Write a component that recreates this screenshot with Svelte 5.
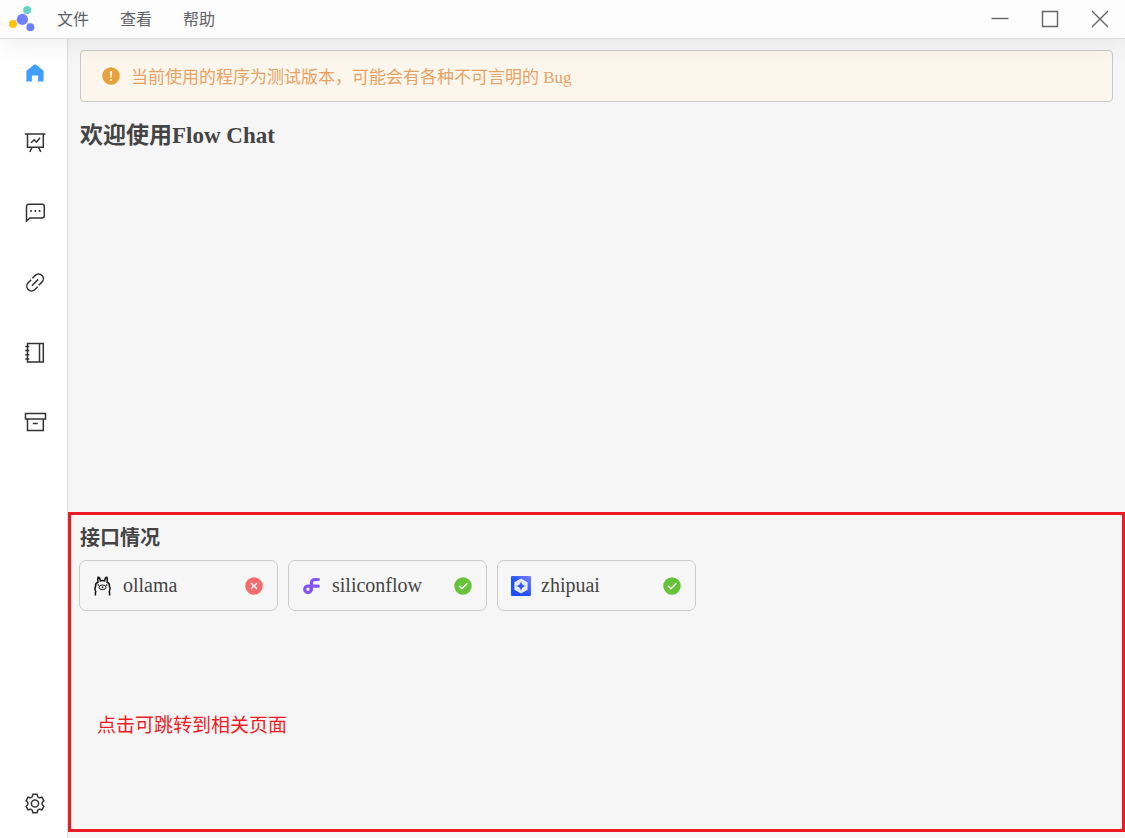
<script lang="ts">
    type Provider = { name: string; ok: boolean }

    const menus = ['文件', '查看', '帮助']

    const navItems = [
        { id: 'home', label: '首页' },
        { id: 'board', label: '看板' },
        { id: 'chat', label: '对话' },
        { id: 'link', label: '链接' },
        { id: 'notebook', label: '笔记' },
        { id: 'archive', label: '归档' }
    ]

    const providers: Provider[] = [
        { name: 'ollama', ok: false },
        { name: 'siliconflow', ok: true },
        { name: 'zhipuai', ok: true }
    ]

    let active = $state('home')
</script>

<div class="app">
    <header>
        <svg class="logo" viewBox="0 0 32 32" aria-hidden="true">
            <path d="M19 5 14 15 5 19M14 15l9 8" fill="none" stroke="#c9cdfa" />
            <circle cx="19.2" cy="7" r="4" fill="#67d3c8" />
            <circle cx="14.4" cy="16.4" r="5.6" fill="#6f7fff" />
            <circle cx="5" cy="21" r="4" fill="#ffc30b" />
            <circle cx="22.4" cy="24.2" r="4" fill="#6f7fff" />
        </svg>
        <nav class="menus">
            {#each menus as menu}
                <button>{menu}</button>
            {/each}
        </nav>
        <div class="window-controls">
            <button aria-label="最小化">
                <svg viewBox="0 0 18 18"><path d="M0.5 8.5h17" /></svg>
            </button>
            <button aria-label="最大化">
                <svg viewBox="0 0 18 18"><path d="M1.5 1.5h15v15h-15z" /></svg>
            </button>
            <button aria-label="关闭">
                <svg viewBox="0 0 18 18"><path d="m1 1 16 16M17 1 1 17" /></svg>
            </button>
        </div>
    </header>

    <div class="body">
        <aside>
            {#each navItems as item}
                <button
                    class:active={active === item.id}
                    aria-label={item.label}
                    onclick={() => (active = item.id)}
                >
                    <svg viewBox="0 0 24 24">
                        {#if item.id === 'home'}
                            <path class="solid" d="M12 3 3.4 9.8V20.5h5.5v-6h6.2v6h5.5V9.8z" />
                        {:else if item.id === 'board'}
                            <path d="M1.8 3h20.6M4.5 3v13.2h15.8V3M9 16.5l-2.2 4.4M15.6 16.5l2.2 4.4" />
                            <path d="m8 11.8 3.2-3 2.3 2.4L17 6.7" />
                        {:else if item.id === 'chat'}
                            <path d="M3.5 20V5.500a2.200 2.200 0 0 1 2.200-2.200h13.400a2.200 2.200 0 0 1 2.200 2.200v9.300a2.200 2.200 0 0 1-2.200 2.200H7z" />
                            <path class="dots" d="M8 10h.01M12.300 10h.01M16.600 10h.01" />
                        {:else if item.id === 'link'}
                            <path d="m9.400 7.200 2.800-2.800a4.700 4.700 0 0 1 6.700 6.700l-3.200 3.200" />
                            <path d="m14.700 15.700-2.800 2.800a4.700 4.700 0 0 1-6.700-6.700l3-3" />
                            <path d="m9 14.700 6.200-6.300" />
                        {:else if item.id === 'notebook'}
                            <path d="M4.500 2.500h15.800v18.500H4.500zM16.500 2.500v18.500" />
                            <path d="M2.300 5.500h4M2.300 9.500h4M2.300 13.800h4M2.300 18h4" />
                        {:else}
                            <path d="M2.500 2.500h20v5.500h-20zM4.500 8v11.500h15.800V8M9.800 12.500h5" />
                        {/if}
                    </svg>
                </button>
            {/each}
            <button class="settings" aria-label="设置">
                <svg viewBox="0 0 24 24">
                    <path d="M10 3.300h4l.7 2.200q.5 1.300 1.900 1.200l2.300-.5 2 3.400-1.500 1.700q-1 1.200 0 2.400l1.500 1.700-2 3.400-2.300-.5q-1.400-.1-1.900 1.200l-.7 2.200h-4l-.7-2.200q-.5-1.300-1.900-1.200l-2.300.5-2-3.400 1.500-1.700q1-1.200 0-2.400L3.100 9.600l2-3.400 2.300.5q1.400.1 1.900-1.200z" />
                    <circle cx="12" cy="12.500" r="3.600" />
                </svg>
            </button>
        </aside>

        <main>
            <div class="alert" role="alert">
                <svg viewBox="0 0 1024 1024" aria-hidden="true">
                    <path d="M512 64a448 448 0 1 1 0 896 448 448 0 0 1 0-896zm0 192a58.432 58.432 0 0 0-58.240 63.744l23.360 256.384a35.072 35.072 0 0 0 69.760 0l23.296-256.384A58.432 58.432 0 0 0 512 256zm0 512a51.200 51.200 0 1 0 0-102.400 51.200 51.200 0 0 0 0 102.400z" />
                </svg>
                <span>当前使用的程序为测试版本，可能会有各种不可言明的 Bug</span>
            </div>
            <h1>欢迎使用Flow Chat</h1>

            <section>
                <h2>接口情况</h2>
                <div class="cards">
                    {#each providers as { name, ok }}
                        <a class="card" href="#{name}">
                            {#if name === 'ollama'}
                                <svg viewBox="0 0 20 20" fill="none" stroke="#111" stroke-width="1.5">
                                    <path d="M2.400 19.500v-2.500q.8-1.200 0-2.400-1.200-2.600.3-4.600-.6-3 2.200-3.800-.5-3.500.3-5 1.600-.2 2.200 3.700 2.100-.9 4.200 0 .6-3.900 2.200-3.700.8 1.500.3 5 2.800.8 2.200 3.800 1.500 2 .3 4.600-.8 1.200 0 2.400v2.500" />
                                    <ellipse cx="9.500" cy="11.300" rx="3.500" ry="2.300" stroke-width="1" />
                                    <path d="M4.700 9h1.200M13.100 9h1.200M9.500 10.600v1.400" />
                                </svg>
                            {:else if name === 'siliconflow'}
                                <svg viewBox="0 0 20 20" fill="none" stroke="#8355f7" stroke-width="3.2" stroke-linecap="round">
                                    <circle cx="6" cy="13.300" r="3.300" />
                                    <path d="M9.300 13.300V7.500q0-4 4-4h3M9.500 10.200h6.800" />
                                </svg>
                            {:else}
                                <svg viewBox="0 0 20 20">
                                    <defs>
                                        <linearGradient id="zhipu" x1="1" y1="0" x2="0" y2="1">
                                            <stop offset="0" stop-color="#7a80ff" />
                                            <stop offset="0.6" stop-color="#1f50ff" />
                                        </linearGradient>
                                    </defs>
                                    <rect width="20" height="20" rx="1" fill="url(#zhipu)" />
                                    <path
                                        fill="#e9ecff"
                                        fill-rule="evenodd"
                                        d="m10 2.600 6.600 3.600v7.600L10 17.400l-6.600-3.600V6.200zM10 5q.6 4.400 5 5-4.400.6-5 5-.6-4.400-5-5 4.400-.6 5-5z"
                                    />
                                </svg>
                            {/if}
                            <span>{name}</span>
                            <svg class="status" class:ok viewBox="0 0 1024 1024" role="img" aria-label={ok ? '可用' : '不可用'}>
                                {#if ok}
                                    <path d="M512 64a448 448 0 1 1 0 896 448 448 0 0 1 0-896zm-55.808 536.384-99.520-99.584a38.400 38.400 0 1 0-54.336 54.336l126.720 126.720a38.272 38.272 0 0 0 54.336 0l262.400-262.464a38.400 38.400 0 1 0-54.272-54.336L456.192 600.384z" />
                                {:else}
                                    <path d="M512 64a448 448 0 1 1 0 896 448 448 0 0 1 0-896zm0 393.664L407.936 353.600a38.400 38.400 0 1 0-54.336 54.336L457.664 512 353.600 616.064a38.400 38.400 0 1 0 54.336 54.336L512 566.336 616.064 670.400a38.400 38.400 0 1 0 54.336-54.336L566.336 512 670.400 407.936a38.400 38.400 0 1 0-54.336-54.336L512 457.664z" />
                                {/if}
                            </svg>
                        </a>
                    {/each}
                </div>
                <p>点击可跳转到相关页面</p>
            </section>
        </main>
    </div>
</div>

<style>
    :global(body) {
        margin: 0;
    }

    .app {
        display: flex;
        flex-direction: column;
        height: 100vh;
        color: #444;
        font-family: 'Liberation Serif', 'Noto Sans CJK SC', serif;
    }

    button {
        padding: 0;
        border: none;
        background: none;
        color: inherit;
        font: inherit;
    }

    svg {
        display: block;
        flex: none;
        width: 20px;
        height: 20px;
    }

    header {
        position: relative;
        z-index: 1;
        display: flex;
        flex: none;
        align-items: center;
        height: 38px;
        padding-left: 8px;
        background: #fdfdfd;
        box-shadow:
            0 1px 0 #dcdcdc,
            0 8px 24px rgba(0, 0, 0, 0.06);
    }

    .logo {
        width: 32px;
        height: 32px;
    }

    .menus {
        display: flex;
        gap: 31px;
        margin-left: 17px;
        padding-bottom: 2px;
        color: #606266;
        font-size: 16px;
    }

    .window-controls {
        display: flex;
        align-self: stretch;
        margin-left: auto;
    }

    .window-controls button {
        display: grid;
        place-items: center;
        width: 50px;
    }

    .window-controls svg {
        width: 18px;
        height: 18px;
        fill: none;
        stroke: #666;
        stroke-width: 1.4;
    }

    .body {
        display: flex;
        flex: 1;
        min-height: 0;
    }

    aside {
        display: flex;
        flex: none;
        flex-direction: column;
        box-sizing: border-box;
        width: 68px;
        padding-left: 3px;
        border-right: 1px solid #dcdcdc;
        background: #fff;
    }

    aside button {
        display: grid;
        place-items: center;
        height: 70px;
        color: #333;
    }

    aside svg {
        width: 24px;
        height: 24px;
        fill: none;
        stroke: currentColor;
        stroke-width: 1.5;
    }

    aside .solid {
        fill: currentColor;
        stroke: none;
    }

    aside .dots {
        stroke-width: 2;
        stroke-linecap: round;
    }

    aside .active {
        color: #409eff;
    }

    aside .settings {
        margin-top: auto;
    }

    main {
        display: flex;
        flex: 1;
        flex-direction: column;
        min-width: 0;
        background: #f6f6f6;
    }

    .alert {
        display: flex;
        align-items: center;
        gap: 10px;
        box-sizing: border-box;
        height: 52px;
        margin: 12px 12px 0;
        padding: 0 20px;
        border: 1px solid #c8c9cc;
        border-radius: 4px;
        background: #fdf6ec;
        color: #e6a23c;
        font-size: 17px;
    }

    .alert svg {
        fill: currentColor;
    }

    .alert span {
        padding-bottom: 2px;
        color: #e6a265;
    }

    h1 {
        margin: 18px 12px 0;
        font-size: 23px;
        line-height: 32px;
    }

    section {
        flex: 0 0 40%;
        box-sizing: border-box;
        margin: auto 0 6px;
        padding: 11px 8px;
        border: 3px solid #ed1c24;
    }

    h2 {
        margin: 0 0 10px 1px;
        font-size: 20px;
        line-height: 24px;
    }

    .cards {
        display: flex;
        flex-wrap: wrap;
        gap: 10px;
    }

    .card {
        display: flex;
        align-items: center;
        gap: 10px;
        box-sizing: border-box;
        width: 199px;
        height: 51px;
        padding: 0 13px;
        border: 1px solid #ccc;
        border-radius: 7px;
        color: inherit;
        font-size: 20px;
        text-decoration: none;
    }

    .status {
        margin-left: auto;
        fill: #f56c6c;
    }

    .status.ok {
        fill: #67c23a;
    }

    p {
        margin: 101px 0 0 18px;
        color: #ed1c24;
        font-family: 'Noto Sans CJK SC', sans-serif;
        font-size: 19px;
        line-height: 24px;
    }
</style>
